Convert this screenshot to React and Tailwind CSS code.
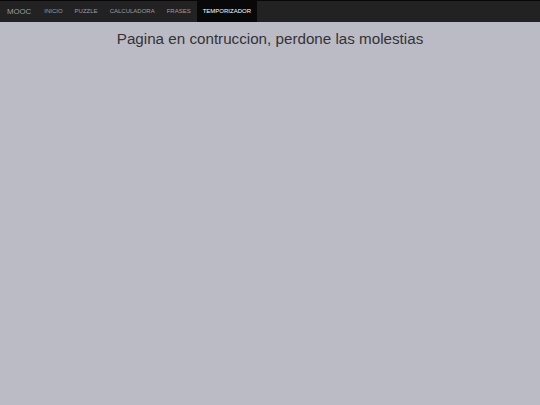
export default function App() {
  const items = ["INICIO", "PUZZLE", "CALCULADORA", "FRASES", "TEMPORIZADOR"];
  return (
    <div className="min-h-[405px] bg-[#bbbbc6]" style={{ fontFamily: '"Liberation Sans", Arial, sans-serif' }}>
      <nav className="flex h-[22px] items-stretch border-t border-[#080808] bg-[#222222]">
        <div className="flex items-center pl-[7px] pr-[7px] text-[7.8px] text-[#9d9d9d]">MOOC</div>
        {items.map((it) => (
          <div
            key={it}
            className={
              it === "TEMPORIZADOR"
                ? "flex items-center bg-[#080808] px-[6px] text-[6px] text-white"
                : "flex items-center px-[6px] text-[6px] text-[#9d9d9d]"
            }
          >
            {it}
          </div>
        ))}
      </nav>
      <h1 className="mt-[7px] text-center text-[15.2px] leading-[20px] text-[#333333]">
        Pagina en contruccion, perdone las molestias
      </h1>
    </div>
  );
}
